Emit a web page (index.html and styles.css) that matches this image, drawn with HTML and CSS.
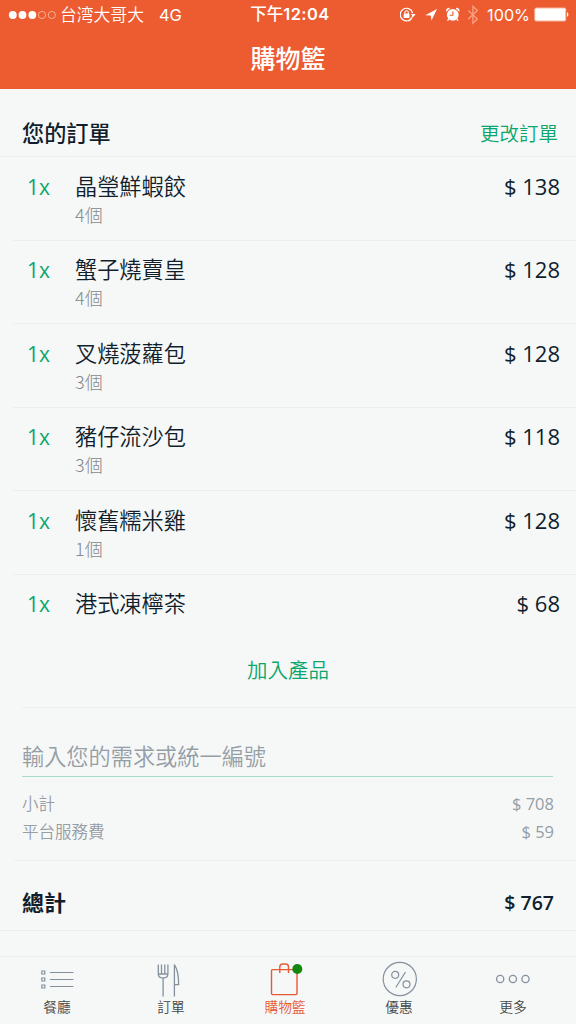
FILE: index.html
```html
<!DOCTYPE html>
<html lang="zh-Hant">
<head>
<meta charset="utf-8">
<title>購物籃</title>
<link rel="stylesheet" href="styles.css">
</head>
<body>
<div class="screen">
  <header class="header">
    <div class="status">
      <div class="status-left">
        <svg class="signal" width="48" height="10" viewBox="0 0 48 10"><g fill="#fff"><circle cx="4.8" cy="5" r="3.9"/><circle cx="14.5" cy="5" r="3.9"/><circle cx="24.3" cy="5" r="3.9"/></g><g fill="none" stroke="#fbb79c" stroke-width=".9"><circle cx="34" cy="5" r="3.6"/><circle cx="43.8" cy="5" r="3.6"/></g></svg>
        <span class="carrier">台湾大哥大</span>
        <span class="network">4G</span>
      </div>
      <div class="clock">下午<span class="clock-digits">12:04</span></div>
      <div class="status-right">
        <svg width="80" height="20" viewBox="0 0 80 20">
          <path d="M12.6 11.2a6.3 6.3 0 1 1 0-3.2M8.6 15.9a6.3 6.3 0 0 0 3.2-2.6" fill="none" stroke="#fff" stroke-width="1.2"/>
          <path d="M10.7 8.9h5l-2.5 3.2z" fill="#fff"/>
          <rect x="3.7" y="8.5" width="5.8" height="4.6" rx=".5" fill="#fff"/>
          <path d="M4.9 8.8V7.4a1.7 1.7 0 0 1 3.4 0v1.4" fill="none" stroke="#fff" stroke-width="1.1"/>
          <path d="M37 4.1 31.5 15.6 30.8 10.4 25.2 10.2z" fill="#fff"/>
          <circle cx="52.8" cy="9.8" r="5.9" fill="#fff"/>
          <path d="M46.6 6.2a3 3 0 0 1 3-2.7M59 6.2a3 3 0 0 0-3-2.7" fill="none" stroke="#fff" stroke-width="1.5"/>
          <path d="m48.8 14-1.3 1.6M56.8 14l1.3 1.6" stroke="#fff" stroke-width="1.3"/>
          <path d="M52.9 6.2v4h-3.2" fill="none" stroke="#ec5c30" stroke-width="1.1"/>
          <path d="m68.3 5.5 9 8.5-4.4 4.2V1.4l4.4 4.2-9 8.4" fill="none" stroke="#f8a284" stroke-width="1.3"/>
        </svg>
        <span class="percent">100%</span>
        <svg class="battery" width="35" height="15" viewBox="0 0 35 15"><rect x=".8" y="1" width="31" height="13" rx="1.5" fill="#fff" stroke="#f9b79d"/><path d="M33 5.3q1.4.3 1.4 2.2T33 9.7z" fill="#fff"/></svg>
      </div>
    </div>
    <h1 class="title">購物籃</h1>
  </header>

  <main class="content">
    <section class="order-head"><h2 class="order-title">您的訂單</h2><a class="edit">更改訂單</a></section>
    <ul class="items">
      <li class="item"><span class="qty">1x</span><div class="info"><div class="name">晶瑩鮮蝦餃</div><div class="note">4個</div></div><span class="price">$ 138</span></li>
      <li class="item"><span class="qty">1x</span><div class="info"><div class="name">蟹子燒賣皇</div><div class="note">4個</div></div><span class="price">$ 128</span></li>
      <li class="item"><span class="qty">1x</span><div class="info"><div class="name">叉燒菠蘿包</div><div class="note">3個</div></div><span class="price">$ 128</span></li>
      <li class="item"><span class="qty">1x</span><div class="info"><div class="name">豬仔流沙包</div><div class="note">3個</div></div><span class="price">$ 118</span></li>
      <li class="item"><span class="qty">1x</span><div class="info"><div class="name">懷舊糯米雞</div><div class="note">1個</div></div><span class="price">$ 128</span></li>
      <li class="item item-last"><span class="qty">1x</span><div class="info"><div class="name">港式凍檸茶</div></div><span class="price">$ 68</span></li>
    </ul>
    <div class="add"><a>加入產品</a></div>
    <div class="request">輸入您的需求或統一編號</div>
    <div class="fees">
      <div class="fee"><span>小計</span><span class="fee-price">$ 708</span></div>
      <div class="fee"><span>平台服務費</span><span class="fee-price">$ 59</span></div>
    </div>
    <div class="total"><span class="total-label">總計</span><span class="total-price">$ 767</span></div>
  </main>

  <nav class="tabs">
    <a class="tab"><svg width="40" height="40" viewBox="0 0 40 40" fill="none" stroke="#84919d"><path d="M13 13.5h23.5M13 20.5h23.5M13 27.5h23.5" stroke-width="1.2"/><path d="M4.8 12h3v3h-3zM4.8 19h3v3h-3zM4.8 26h3v3h-3z" stroke-width="1.2"/></svg><span>餐廳</span></a>
    <a class="tab"><svg width="40" height="40" viewBox="0 0 40 40" fill="none" stroke="#84919d" stroke-width="1.3"><path d="M7.3 5.5V15q0 4 4.8 4t4.8-4V5.5M10.5 5.5V15M13.8 5.5V15M7.3 15h9.6M12.1 19v18.5M23.4 5.5v32M23.4 5.7q4.4 6.8 4.2 20h-4.2"/></svg><span>訂單</span></a>
    <a class="tab active"><svg width="40" height="40" viewBox="0 0 40 40" fill="none" stroke="#e75a34" stroke-width="1.4"><rect x="6.5" y="10.6" width="25.5" height="25" rx="1"/><path d="M14.8 14V8q0-3 3-3h2.7q3 0 3 3v6"/><circle cx="32.3" cy="10" r="5" fill="#12880d" stroke="none"/></svg><span>購物籃</span></a>
    <a class="tab"><svg width="40" height="40" viewBox="0 0 40 40" fill="none" stroke="#84919d" stroke-width="1.2"><circle cx="20.8" cy="20" r="16.6"/><circle cx="16.2" cy="15.8" r="3.5"/><circle cx="27.5" cy="25.3" r="3.5"/><path d="M26.5 13 16.8 28.5"/></svg><span>優惠</span></a>
    <a class="tab"><svg width="40" height="40" viewBox="0 0 40 40" fill="none" stroke="#84919d" stroke-width="1.3"><circle cx="7.2" cy="20" r="3.6"/><circle cx="19.9" cy="20" r="3.6"/><circle cx="32.5" cy="20" r="3.6"/></svg><span>更多</span></a>
  </nav>
</div>
</body>
</html>
```
FILE: styles.css
```css
* { box-sizing: border-box; }
body {
  margin: 0;
  background: #f6f8f8;
  color: #111e2c;
  font-family: "Noto Sans CJK TC", sans-serif;
}
h1, h2, ul { margin: 0; padding: 0; font-size: inherit; list-style: none; }
.screen { width: 576px; height: 1024px; display: flex; flex-direction: column; overflow: hidden; }
.header { height: 89px; flex: none; background: #ec5c30; color: #fff; }
.status { height: 28px; display: grid; grid-template-columns: 1fr auto 1fr; align-items: center; padding: 0 7px 0 8px; line-height: 28px; }
.status-left, .status-right { display: flex; align-items: center; }
.status-right { justify-content: flex-end; }
.carrier { margin-left: 4px; font-size: 16.8px; font-weight: 350; line-height: 26px; padding-bottom: 2px; }
.network { margin-left: 15px; font: 16.5px/28px Inter, sans-serif; }
.clock { padding-left: 3px; font-size: 16.5px; font-weight: 500; line-height: 26px; padding-bottom: 2px; white-space: nowrap; }
.clock-digits { font-family: Inter, sans-serif; font-weight: 600; font-size: 16.5px; letter-spacing: .4px; }
.percent { margin: 0 4px 0 7px; font: 16.2px/28px Inter, sans-serif; }
.title { font-size: 25px; font-weight: 500; line-height: 58px; text-align: center; }

.order-head { height: 68px; padding: 21px 18px 0 22px; display: flex; justify-content: space-between; line-height: 44px; border-bottom: 1px solid #eceeee; }
.order-title { font-size: 22.2px; font-weight: 500; }
.edit { padding-top: 1px; font-size: 19.5px; font-weight: 350; color: #0aa66c; }
.item { height: 83.5px; margin-left: 13px; padding: 12.5px 16px 0 14px; display: flex; border-bottom: 1px solid #eceeee; line-height: 32px; }
.item-last { height: 63px; border: 0; }
.qty { width: 48px; padding-top: 1px; font-family: "Open Sans", sans-serif; font-size: 21px; color: #0aa66c; }
.info { flex: 1; }
.name { font-size: 22.2px; font-weight: 350; height: 31px; line-height: 31px; }
.note { font-size: 18px; font-weight: 300; line-height: 27px; color: #85878a; }
.price { font-family: "Open Sans", sans-serif; font-size: 22px; }
.add { height: 70px; margin-left: 22px; padding-top: 11px; padding-right: 22px; line-height: 40px; text-align: center; font-size: 20.5px; font-weight: 350; color: #0aa66c; border-bottom: 1px solid #eceeee; }
.request { height: 69px; margin: 0 23px 0 22px; padding-top: 27px; line-height: 40px; font-size: 22.2px; font-weight: 350; color: #959da5; border-bottom: 1px solid #a8dcc9; }
.fees { height: 84px; margin-left: 14px; padding: 13px 22px 0 8px; border-bottom: 1px solid #eceeee; }
.fee { display: flex; justify-content: space-between; height: 28px; line-height: 27px; font-size: 16.5px; font-weight: 350; color: #959da5; }
.fee-price { font-family: "Open Sans", sans-serif; font-weight: 400; line-height: 28px; }
.total { height: 70px; padding: 18px 22px 0 22px; display: flex; justify-content: space-between; line-height: 44px; border-bottom: 1px solid #eceeee; }
.total-label { font-size: 22px; font-weight: 700; }
.total-price { padding-top: 2px; font-family: "Open Sans", sans-serif; font-size: 19.5px; font-weight: 600; }

.tabs { height: 68px; flex: none; margin-top: auto; padding: 2px 6px 0 0; display: grid; grid-template-columns: repeat(5, 114px); border-top: 1px solid #ecebeb; }
.tab { display: flex; flex-direction: column; align-items: center; font-size: 13.7px; font-weight: 350; line-height: 14px; color: #454745; }
.active { color: #e75a34; }
```
